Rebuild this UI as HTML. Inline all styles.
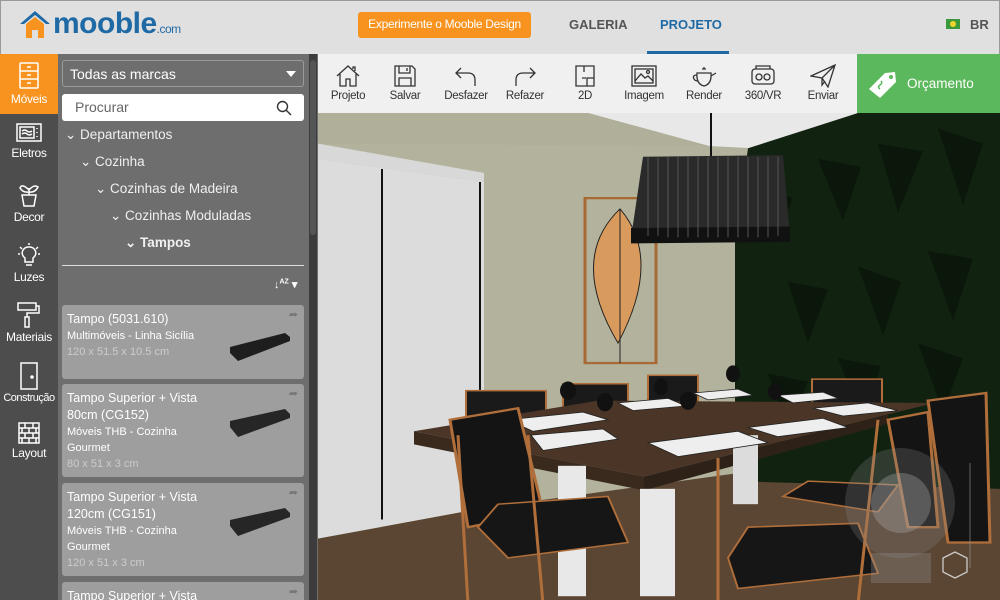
<!DOCTYPE html>
<html><head><meta charset="utf-8"><style>
*{margin:0;padding:0;box-sizing:border-box}
html,body{width:1000px;height:600px;overflow:hidden}
body{font-family:"Liberation Sans",sans-serif;background:#e0e0e0;position:relative}
.abs{position:absolute}
#hdr{left:0;top:0;width:1000px;height:54px;background:#e0e0e0;border-top:1px solid #999;border-left:1px solid #999;border-right:1px solid #999}
#bar{left:0;top:54px;width:58px;height:546px;background:#4d4d4d}
.it{position:absolute;left:0;width:58px;height:60px;color:#fff;font-size:12px;text-align:center;letter-spacing:-0.3px}
.it svg{display:block;margin:8px auto 2px}
#panel{left:58px;top:54px;width:260px;height:546px;background:#6e6e6e}
.tree{position:absolute;color:#f0f0f0;font-size:13.5px;white-space:nowrap}
.card{position:absolute;left:62px;width:242px;background:#9e9e9e;border-radius:3px;color:#fff;font-size:11px;padding:6px 5px;line-height:16px;overflow:hidden}
.card .t{font-size:12.5px;line-height:17px;display:block;width:150px}
.card .d{color:#ccc}
.card .sl{position:absolute;right:8px;width:66px;height:28px}
#tb{left:318px;top:54px;width:539px;height:59px;background:#f0f0f0}
.tbi{position:absolute;top:0;width:60px;text-align:center;font-size:11.5px;color:#333;letter-spacing:-0.3px;white-space:nowrap}
.tbi svg{display:block;margin:10px auto 2px}
</style></head><body>
<div id="hdr" class="abs">
 <svg class="abs" style="left:17px;top:8px" width="44" height="30" viewBox="0 0 44 30"><path d="M2 15 L17 2 L32 15 L28 15 L17 6 L6 15Z" fill="#1f6aa5"/><path d="M8 15 L17 8 L26 15 L26 29 L20 29 L20 21 L14 21 L14 29 L8 29Z" fill="#f7931e"/></svg>
 <div class="abs" style="left:52px;top:6px;font-size:30px;font-weight:bold;color:#1f6aa5;letter-spacing:-0.5px">mooble<span style="font-size:12px;font-weight:normal">.com</span></div>
 <div class="abs" style="left:357px;top:11px;width:173px;height:26px;background:#f7931e;border-radius:3px;color:#fff;font-size:12px;line-height:25px;text-align:center;white-space:nowrap;letter-spacing:-0.3px">Experimente o Mooble Design</div>
 <div class="abs" style="left:568px;top:16px;font-size:13px;font-weight:bold;color:#555">GALERIA</div>
 <div class="abs" style="left:659px;top:16px;font-size:13px;font-weight:bold;color:#1f6aa5">PROJETO</div>
 <div class="abs" style="left:646px;top:50px;width:82px;height:4px;background:#1f6aa5"></div>
 <div class="abs" style="left:945px;top:18px;width:14px;height:10px;background:#3a9a3a"><div style="margin:2px 4px;width:6px;height:6px;border-radius:50%;background:#f2d22e"></div></div>
 <div class="abs" style="left:969px;top:16px;font-size:13px;font-weight:bold;color:#555">BR</div>
</div>
<div id="bar" class="abs">
 <div class="it" style="top:0;background:#f7931e"><svg width="22" height="28" viewBox="0 0 22 28" fill="none" stroke="#fff" stroke-width="1.5"><rect x="2" y="1" width="18" height="25" rx="1"/><path d="M2 9H20M2 17H20M9 5H13M9 13H13M9 21H13"/></svg>Móveis</div>
 <div class="it" style="top:60px"><svg width="26" height="22" viewBox="0 0 26 22" fill="none" stroke="#fff" stroke-width="1.5"><rect x="1" y="2" width="24" height="17"/><rect x="4" y="5" width="14" height="11"/><path d="M6 9q3-2 5 0t5 0M6 12q3-2 5 0t5 0M21 6v1M21 10v1M21 14v1"/></svg>Eletros</div>
 <div class="it" style="top:120px"><svg width="22" height="26" viewBox="0 0 22 26" fill="none" stroke="#fff" stroke-width="1.5"><path d="M11 13V6M11 8Q4 1 2 6Q5 11 11 10M11 8Q16 2 20 5Q17 11 11 10M4 13H18L16 24H6Z"/></svg>Decor</div>
 <div class="it" style="top:180px"><svg width="24" height="26" viewBox="0 0 24 26" fill="none" stroke="#fff" stroke-width="1.5"><path d="M12 5a6 6 0 0 0-4 11v4h8v-4a6 6 0 0 0-4-11M9 23h6M12 1v2M3 5l2 2M21 5l-2 2M1 12h2M21 12h2"/></svg>Luzes</div>
 <div class="it" style="top:240px"><svg width="24" height="26" viewBox="0 0 24 26" fill="none" stroke="#fff" stroke-width="1.5"><rect x="1" y="1" width="18" height="7"/><path d="M19 4h3v7H10v4M8 15h4v10H8Z"/></svg>Materiais</div>
 <div class="it" style="top:300px;font-size:11px;letter-spacing:-0.5px"><svg width="20" height="28" viewBox="0 0 20 28" fill="none" stroke="#fff" stroke-width="1.5"><rect x="2" y="1" width="16" height="26"/><circle cx="13" cy="15" r="1" fill="#fff"/></svg>Construção</div>
 <div class="it" style="top:360px"><svg width="22" height="22" viewBox="0 0 22 22" fill="none" stroke="#fff" stroke-width="1.5"><rect x="1" y="1" width="20" height="20"/><path d="M1 6H21M1 11H21M1 16H21M7 1V6M15 1V6M4 6V11M11 6V11M18 6V11M7 11V16M15 11V16M4 16V21M11 16V21M18 16V21"/></svg>Layout</div>
</div>
<div id="panel" class="abs">
 <div class="abs" style="left:4px;top:6px;width:242px;height:27px;border:1px solid #9a9a9a;border-radius:3px;color:#fff;font-size:14px;padding:5px 7px">Todas as marcas<span style="position:absolute;right:7px;top:10px;border:5px solid transparent;border-top:6px solid #fff;border-bottom:0"></span></div>
 <div class="abs" style="left:4px;top:40px;width:242px;height:27px;background:#fff;border-radius:3px;color:#666;font-size:14px;padding:5px 13px">Procurar<svg style="position:absolute;right:12px;top:6px" width="16" height="16" viewBox="0 0 16 16" fill="none" stroke="#333" stroke-width="1.4"><circle cx="6.5" cy="6.5" r="5"/><path d="M10 10l5 5"/></svg></div>
 <div class="tree" style="left:7px;top:73px">⌄ Departamentos</div>
 <div class="tree" style="left:22px;top:100px">⌄ Cozinha</div>
 <div class="tree" style="left:37px;top:127px">⌄ Cozinhas de Madeira</div>
 <div class="tree" style="left:52px;top:154px">⌄ Cozinhas Moduladas</div>
 <div class="tree" style="left:67px;top:181px;font-weight:bold">⌄ Tampos</div>
 <div class="abs" style="left:4px;top:211px;width:242px;height:1px;background:#ddd"></div>
 <div class="abs" style="left:216px;top:224px;color:#fff;font-size:11px;font-weight:bold">↓<sup style="font-size:7px">AZ</sup> ▾</div>
 <div class="abs" style="left:251px;top:0;width:8px;height:546px;background:#3c3c3c"><div style="margin:6px 1px;width:6px;height:175px;background:#555;border-radius:3px"></div></div>
</div>
<div class="card" style="top:305px;height:74px"><span class="t">Tampo (5031.610)</span>Multimóveis - Linha Sicília<br><span class="d">120 x 51.5 x 10.5 cm</span><svg class="sl" style="top:28px" viewBox="0 0 66 28"><path d="M0 14L55 0L60 4L60 8L8 28L0 20Z" fill="#1e1e1e"/></svg><span style="position:absolute;right:6px;top:2px;color:#777">➦</span></div>
<div class="card" style="top:384px;height:93px"><span class="t">Tampo Superior + Vista 80cm (CG152)</span><span style="display:block;width:140px">Móveis THB - Cozinha Gourmet</span><span class="d">80 x 51 x 3 cm</span><svg class="sl" style="top:25px" viewBox="0 0 66 28"><path d="M0 12L55 0L60 5L60 9L8 28L0 18Z" fill="#262626"/></svg><span style="position:absolute;right:6px;top:2px;color:#777">➦</span></div>
<div class="card" style="top:483px;height:93px"><span class="t">Tampo Superior + Vista 120cm (CG151)</span><span style="display:block;width:140px">Móveis THB - Cozinha Gourmet</span><span class="d">120 x 51 x 3 cm</span><svg class="sl" style="top:25px" viewBox="0 0 66 28"><path d="M0 12L55 0L60 5L60 9L8 28L0 18Z" fill="#262626"/></svg><span style="position:absolute;right:6px;top:2px;color:#777">➦</span></div>
<div class="card" style="top:582px;height:18px;border-radius:3px 3px 0 0"><span class="t">Tampo Superior + Vista</span><span style="position:absolute;right:6px;top:2px;color:#777">➦</span></div>
<div id="tb" class="abs">
 <div class="tbi" style="left:0"><svg width="26" height="24" viewBox="0 0 26 24" fill="none" stroke="#333" stroke-width="1.3"><path d="M2 12L13 2L24 12M5 10V22H11V15H15V22H21V10M18 5V3H20V7"/></svg>Projeto</div>
 <div class="tbi" style="left:57px"><svg width="24" height="24" viewBox="0 0 24 24" fill="none" stroke="#333" stroke-width="1.3"><path d="M2 2H19L22 5V22H2Z M6 2V9H17V2M14 4V7M6 22V14H18V22"/></svg>Salvar</div>
 <div class="tbi" style="left:118px"><svg width="24" height="24" viewBox="0 0 24 24" fill="none" stroke="#333" stroke-width="1.3"><path d="M7 4L2 9L7 14M2 9H14Q21 9 21 16V22"/></svg>Desfazer</div>
 <div class="tbi" style="left:177px"><svg width="24" height="24" viewBox="0 0 24 24" fill="none" stroke="#333" stroke-width="1.3"><path d="M17 4L22 9L17 14M22 9H10Q3 9 3 16V22"/></svg>Refazer</div>
 <div class="tbi" style="left:237px"><svg width="22" height="24" viewBox="0 0 22 24" fill="none" stroke="#333" stroke-width="1.3"><path d="M2 2H20V22H2ZM10 2V8M13 22V14H20M8 14H12"/></svg>2D</div>
 <div class="tbi" style="left:296px"><svg width="26" height="24" viewBox="0 0 26 24" fill="none" stroke="#333" stroke-width="1.3"><rect x="1" y="2" width="24" height="20"/><rect x="4" y="5" width="18" height="14"/><path d="M4 17L10 10L14 14L17 12L22 17"/><circle cx="17" cy="8" r="1.5"/></svg>Imagem</div>
 <div class="tbi" style="left:356px"><svg width="26" height="24" viewBox="0 0 26 24" fill="none" stroke="#333" stroke-width="1.3"><path d="M11 5H15M13 3V5M6 9H20Q21 20 13 22Q5 20 6 9ZM6 11Q1 11 3 15Q4 17 7 17M20 12L25 9"/></svg>Render</div>
 <div class="tbi" style="left:415px"><svg width="26" height="24" viewBox="0 0 26 24" fill="none" stroke="#333" stroke-width="1.3"><rect x="2" y="5" width="22" height="15" rx="3"/><circle cx="9" cy="13" r="3"/><circle cx="17" cy="13" r="3"/><path d="M6 5V2H20V5"/></svg>360/VR</div>
 <div class="tbi" style="left:475px"><svg width="26" height="24" viewBox="0 0 26 24" fill="none" stroke="#333" stroke-width="1.3"><path d="M1 12L25 1L18 23L12 14ZM25 1L12 14V21L15 17"/></svg>Enviar</div>
</div>
<div class="abs" style="left:857px;top:54px;width:143px;height:59px;background:#5cb85c;color:#fff;font-size:13.5px">
 <svg class="abs" style="left:10px;top:15px" width="32" height="32" viewBox="0 0 32 32"><path d="M2 20L18 4L28 3L29 13L13 29Z" fill="#fff"/><circle cx="24" cy="8" r="2" fill="#5cb85c"/><path d="M13 20q-3-2 0-4t1-4" stroke="#5cb85c" stroke-width="1.5" fill="none"/></svg>
 <div class="abs" style="left:50px;top:22px">Orçamento</div>
</div>
<svg class="abs" style="left:318px;top:113px" width="682" height="487" viewBox="0 0 682 487">
 <rect width="682" height="487" fill="#b3b39d"/>
 <g transform="scale(1,0.767)">
 <polygon points="270,0 540,0 435,46 391,43" fill="#e8e8e8"/>
 <polygon points="0,0 270,0 391,43 0,40" fill="#b0b09a"/>
 <polygon points="0,40 166,78 166,90 0,60" fill="#d8d8d8"/>
 <polygon points="0,60 166,90 166,515 0,555" fill="#dcdcdc"/>
 <line x1="64" y1="73" x2="64" y2="530" stroke="#111" stroke-width="2"/>
 <line x1="162" y1="90" x2="162" y2="515" stroke="#111" stroke-width="2"/>
 <polygon points="0,555 166,515 417,470 682,480 682,640 0,640" fill="#5b4634"/>
 <polygon points="430,46 540,0 682,0 682,490 417,480 417,170" fill="#112211"/>
 <g fill="#0a160a" opacity="0.9"><path d="M440 100l20 60l15-50zM500 60l25 80l18-70zM560 40l20 90l25-80zM620 20l25 100l20-80zM470 220l20 80l20-70zM540 200l25 90l18-70zM610 180l25 90l20-80zM450 340l20 70l20-60zM520 320l25 80l18-70zM600 300l25 90l20-70z"/></g>
 <rect x="267" y="111" width="71" height="215" fill="none" stroke="#a86a35" stroke-width="3"/>
 <path d="M302 125Q250 190 300 300Q345 190 302 125Z" fill="#d99a5d" stroke="#222"/>
 <line x1="302" y1="125" x2="302" y2="326" stroke="#222"/>
 <line x1="393" y1="0" x2="393" y2="57" stroke="#111" stroke-width="2"/>
 <polygon points="325,57 465,55 472,160 313,163" fill="#2a2a2a"/>
 <polygon points="313,150 472,148 472,168 313,170" fill="#111"/>
 <g stroke="#555" stroke-width="1">
  <path d="M330 58V160M340 58V160M350 57V162M360 57V162M370 57V162M380 57V162M390 57V162M400 57V162M410 57V162M420 57V162M430 57V162M440 57V162M450 57V162M460 57V160"/>
 </g>
 <g fill="#1a1a1a" stroke="#b06e3a" stroke-width="2">
  <rect x="148" y="362" width="80" height="50"/><rect x="245" y="353" width="65" height="45"/><rect x="330" y="342" width="50" height="40"/><rect x="494" y="347" width="70" height="40"/>
 </g>
 <polygon points="96,415 280,375 617,378 570,393 326,474" fill="#4a3526"/>
 <polygon points="96,415 326,474 326,492 96,432" fill="#3a2a1e"/>
 <polygon points="326,474 570,393 570,405 326,492" fill="#2e2218"/>
 <rect x="240" y="460" width="28" height="170" fill="#e8e8e8"/>
 <rect x="322" y="490" width="35" height="140" fill="#e8e8e8"/>
 <rect x="415" y="420" width="25" height="90" fill="#dcdcdc"/>
 <g fill="#eee" stroke="#222" stroke-width="1">
  <polygon points="190,400 265,390 290,400 215,415"/><polygon points="213,420 285,412 300,425 225,440"/>
  <polygon points="330,430 420,415 450,430 360,448"/><polygon points="430,410 505,398 530,410 460,422"/>
  <polygon points="300,378 350,372 368,382 315,388"/><polygon points="375,365 420,360 435,368 390,374"/>
  <polygon points="460,368 505,364 520,372 475,378"/><polygon points="495,385 550,378 580,388 525,395"/>
 </g>
 <g fill="#111"><ellipse cx="250" cy="362" rx="8" ry="12"/><ellipse cx="287" cy="377" rx="8" ry="12"/><ellipse cx="370" cy="375" rx="8" ry="12"/><ellipse cx="343" cy="357" rx="7" ry="11"/><ellipse cx="415" cy="340" rx="7" ry="11"/><ellipse cx="457" cy="363" rx="7" ry="11"/></g>
 <g fill="#141414" stroke="#b06e3a" stroke-width="3">
  <polygon points="132,400 200,385 225,520 150,540"/>
  <polygon points="610,375 668,365 672,560 630,560"/>
  <polygon points="570,400 610,390 620,540 590,540"/>
 </g>
 <polygon points="160,540 180,510 290,500 310,560 190,580" fill="#161616" stroke="#b06e3a" stroke-width="2"/>
 <polygon points="410,580 430,540 540,535 560,600 420,620" fill="#161616" stroke="#b06e3a" stroke-width="2"/>
 <polygon points="465,500 490,480 580,485 560,520" fill="#161616" stroke="#b06e3a" stroke-width="2"/>
 <line x1="140" y1="420" x2="150" y2="640" stroke="#b06e3a" stroke-width="3"/>
 <line x1="210" y1="420" x2="225" y2="640" stroke="#b06e3a" stroke-width="3"/>
 <line x1="400" y1="640" x2="400" y2="450" stroke="#b06e3a" stroke-width="3"/>
 <line x1="560" y1="400" x2="540" y2="640" stroke="#b06e3a" stroke-width="3"/>
 </g>
 <circle cx="582" cy="390" r="55" fill="#888" opacity="0.25"/>
 <circle cx="583" cy="390" r="30" fill="#aaa" opacity="0.35"/>
 <rect x="553" y="440" width="60" height="30" fill="#999" opacity="0.3"/>
 <path d="M625 445l12-6l12 6v14l-12 6l-12-6z" fill="none" stroke="#ccc" stroke-width="1.3"/>
 <line x1="652" y1="350" x2="652" y2="455" stroke="#999" opacity="0.6"/>
</svg>
</body></html>
